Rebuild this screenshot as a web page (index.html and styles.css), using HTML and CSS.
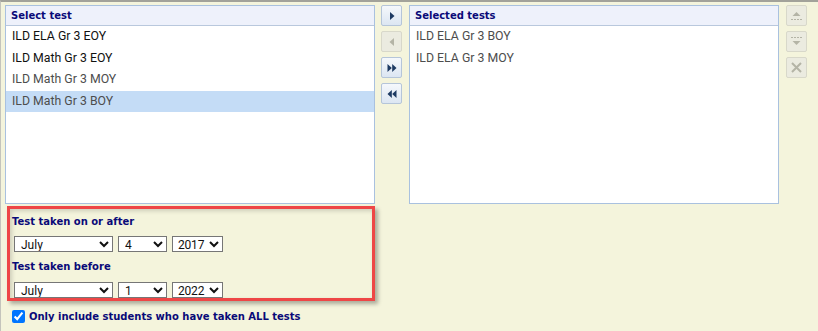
FILE: index.html
```html
<!DOCTYPE html>
<html lang="en">
<head>
    <meta charset="UTF-8">
    <title>Test selection</title>
    <link rel="stylesheet" href="styles.css">
</head>
<body>
    <div class="panel">
        <div class="picker">
            <div class="listbox">
                <div class="listbox-head">Select test</div>
                <div class="item">ILD ELA Gr 3 EOY</div>
                <div class="item">ILD Math Gr 3 EOY</div>
                <div class="item dim">ILD Math Gr 3 MOY</div>
                <div class="item dim selected">ILD Math Gr 3 BOY</div>
            </div>

            <div class="tools move-tools">
                <button type="button" class="tool" title="Add">
                    <svg width="10" height="10" viewBox="0 0 10 10"><polygon points="3,1 7.5,5 3,9" /></svg>
                </button>
                <button type="button" class="tool off" title="Remove">
                    <svg width="10" height="10" viewBox="0 0 10 10"><polygon points="7,1 2.5,5 7,9" /></svg>
                </button>
                <button type="button" class="tool" title="Add all">
                    <svg width="10" height="10" viewBox="0 0 10 10"><polygon points="0.5,1 4.8,5 0.5,9" /><polygon points="5.2,1 9.5,5 5.2,9" /></svg>
                </button>
                <button type="button" class="tool" title="Remove all">
                    <svg width="10" height="10" viewBox="0 0 10 10"><polygon points="4.8,1 0.5,5 4.8,9" /><polygon points="9.5,1 5.2,5 9.5,9" /></svg>
                </button>
            </div>

            <div class="listbox">
                <div class="listbox-head">Selected tests</div>
                <div class="item dim">ILD ELA Gr 3 BOY</div>
                <div class="item dim">ILD ELA Gr 3 MOY</div>
            </div>

            <div class="tools order-tools">
                <button type="button" class="tool off" title="Move up">
                    <svg width="13" height="13" viewBox="0 0 13 13"><polygon points="6.5,3 10.5,7 2.5,7" /><path d="M1 10.5h11" class="dash" /></svg>
                </button>
                <button type="button" class="tool off" title="Move down">
                    <svg width="13" height="13" viewBox="0 0 13 13"><path d="M1 2.5h11" class="dash" /><polygon points="2.5,6 10.5,6 6.5,10" /></svg>
                </button>
                <button type="button" class="tool off" title="Delete">
                    <svg width="13" height="13" viewBox="0 0 13 13"><path d="M2 2L11 11M11 2L2 11" class="cross" /></svg>
                </button>
            </div>
        </div>

        <div class="dates">
            <div class="date-label">Test taken on or after</div>
            <div class="date-row">
                <select class="month">
                    <option>January</option><option>February</option><option>March</option>
                    <option>April</option><option>May</option><option>June</option>
                    <option selected>July</option><option>August</option><option>September</option>
                    <option>October</option><option>November</option><option>December</option>
                </select>
                <select class="day">
                    <option>1</option><option>2</option><option>3</option><option selected>4</option><option>5</option>
                </select>
                <select class="year">
                    <option selected>2017</option><option>2018</option><option>2019</option>
                    <option>2020</option><option>2021</option><option>2022</option>
                </select>
            </div>
            <div class="date-label">Test taken before</div>
            <div class="date-row">
                <select class="month">
                    <option>January</option><option>February</option><option>March</option>
                    <option>April</option><option>May</option><option>June</option>
                    <option selected>July</option><option>August</option><option>September</option>
                    <option>October</option><option>November</option><option>December</option>
                </select>
                <select class="day">
                    <option selected>1</option><option>2</option><option>3</option><option>4</option><option>5</option>
                </select>
                <select class="year">
                    <option>2017</option><option>2018</option><option>2019</option>
                    <option>2020</option><option>2021</option><option selected>2022</option>
                </select>
            </div>
        </div>

        <label class="all-tests">
            <input type="checkbox" checked>
            <span>Only include students who have taken ALL tests</span>
        </label>
    </div>
</body>
</html>
```

FILE: styles.css
```css
body {
    margin: 0;
    background-color: #f4f4dc;
    font-family: Roboto, 'Liberation Sans', Arial, sans-serif;
}
.panel {
    min-height: 331px;
    box-sizing: border-box;
    border-top: 2px solid #a2a29a;
    border-left: 1px solid #c4c4bc;
    padding: 3px 0 0 4px;
    background-color: #f4f4dc;
}
.picker {
    display: flex;
    align-items: flex-start;
}
.listbox {
    width: 370px;
    height: 199px;
    box-sizing: border-box;
    border: 1px solid #a9c1df;
    background: #FFF;
}
.listbox-head {
    height: 19px;
    line-height: 19px;
    padding-left: 5px;
    border-bottom: 1px solid #b9c8dd;
    background: #eef1fb;
    color: #0a0a78;
    font-family: 'DejaVu Sans', Verdana, sans-serif;
    font-size: 10px;
    font-weight: bold;
}
.item {
    height: 21.5px;
    line-height: 21.5px;
    padding-left: 6px;
    font-size: 12.3px;
    color: #111;
}
.item.dim {
    color: #4d4d4d;
}
.item.selected {
    background: #c4dcf6;
}
.tools {
    display: flex;
    flex-direction: column;
    gap: 5px;
}
.move-tools {
    margin: 0 7px 0 6px;
}
.order-tools {
    margin-left: 7px;
}
.tool {
    width: 21px;
    height: 21px;
    padding: 0;
    display: flex;
    align-items: center;
    justify-content: center;
    border: 1px solid #b5c5d9;
    border-radius: 2px;
    background: linear-gradient(#f5f8fc, #dce6f2);
    fill: #1d3a62;
}
.tool.off {
    border-color: #d8d8ca;
    background: #ebebe0;
    fill: #b4b4a6;
}
.dash {
    stroke: #b4b4a6;
    stroke-width: 1;
    stroke-dasharray: 2 1;
}
.cross {
    stroke: #b4b4a6;
    stroke-width: 2;
}
.dates {
    width: 368px;
    height: 95px;
    box-sizing: border-box;
    margin: 2px 0 0 2px;
    padding: 6px 0 0 2px;
    border: 3px solid #ee4646;
    box-shadow: 3px 3px 4px rgba(0, 0, 0, 0.3), inset 2px 2px 4px rgba(0, 0, 0, 0.16);
}
.date-label {
    line-height: 13px;
    color: #0a0a78;
    font-family: 'DejaVu Sans', Verdana, sans-serif;
    font-size: 10px;
    font-weight: bold;
}
.date-row {
    display: flex;
    gap: 5px;
    margin: 8px 0 8px 2px;
}
.date-row + .date-label + .date-row {
    margin-top: 9px;
    margin-bottom: 0;
}
select {
    height: 16px;
    padding: 0 0 0 2px;
    border: 1px solid #767676;
    border-radius: 0;
    background: #FFF;
    color: #111;
    font-family: Roboto, 'Liberation Sans', Arial, sans-serif;
    font-size: 12px;
}
.month {
    width: 99px;
}
.day {
    width: 49px;
}
.year {
    width: 51px;
}
.year {
    padding-left: 1px;
    letter-spacing: -0.2px;
}
.all-tests {
    display: flex;
    align-items: center;
    margin: 9px 0 0 7px;
    color: #0a0a78;
    font-family: 'DejaVu Sans', Verdana, sans-serif;
    font-size: 10px;
    font-weight: bold;
}
.all-tests input {
    width: 13px;
    height: 13px;
    margin: 0 4px 0 0;
}
```
